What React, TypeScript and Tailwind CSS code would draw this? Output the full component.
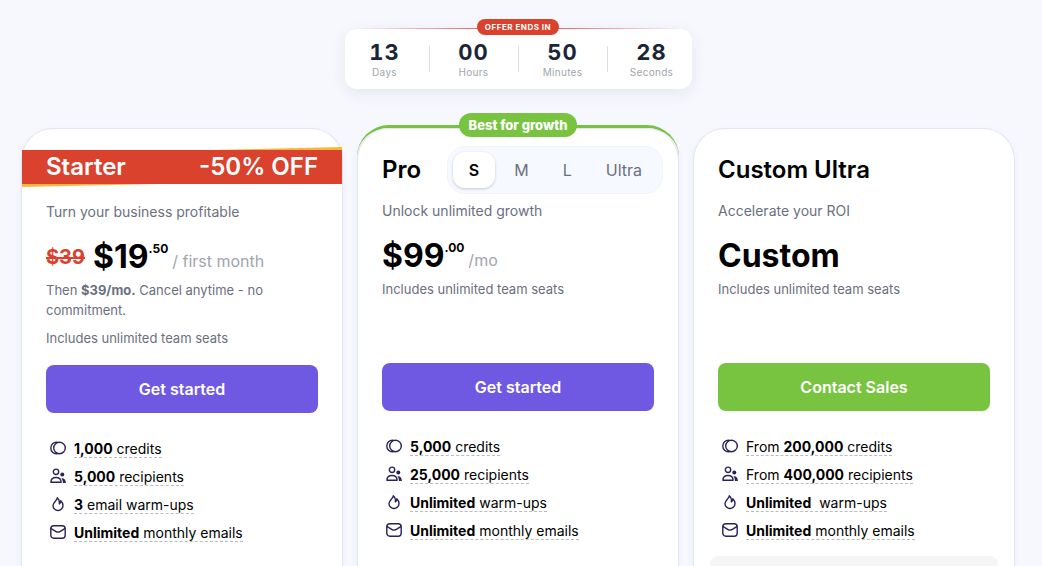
import React from "react";

type Feature = {
  icon: React.ReactNode;
  before?: string;
  bold: string;
  after: string;
};

const countdown = [
  { value: "13", label: "Days" },
  { value: "00", label: "Hours" },
  { value: "50", label: "Minutes" },
  { value: "28", label: "Seconds" },
];

const sizes = ["S", "M", "L", "Ultra"];

function App() {
  return (
    <main className="min-h-screen bg-[#f7f8fe] pt-[29px] pr-[27px] pl-[21px] font-['Inter',sans-serif] text-black antialiased">
      <Countdown />
      <div className="mt-[39px] grid grid-cols-3 gap-[14px]">
        <StarterCard />
        <ProCard />
        <CustomCard />
      </div>
    </main>
  );
}

export default App;

const Countdown = () => {
  return (
    <section className="relative mx-auto flex h-[60px] w-fit items-center rounded-xl bg-white shadow-[0_4px_16px_rgba(30,35,60,0.08)]">
      <div className="absolute inset-x-3 -top-px h-px bg-linear-to-r from-transparent via-[#da422e] to-transparent"></div>
      <div className="absolute inset-x-0 -top-[10px] flex justify-center">
        <span className="h-4 rounded-full bg-[#da422e] px-2 text-[8px] leading-4 font-bold tracking-[0.5px] text-white">
          OFFER ENDS IN
        </span>
      </div>
      {countdown.map((item, i) => (
        <React.Fragment key={item.label}>
          {i > 0 && <div className="mx-1 h-[26px] w-px bg-[#d9dde5]"></div>}
          <div className="flex w-20 flex-col items-center pt-0.5">
            <span className="text-[22px] leading-6 font-bold tracking-[1px] text-[#1c2536] tabular-nums">
              {item.value}
            </span>
            <span className="text-[10px] leading-4 tracking-[0.3px] text-[#a2a5ad]">
              {item.label}
            </span>
          </div>
        </React.Fragment>
      ))}
    </section>
  );
};

const StarterCard = () => {
  return (
    <article className="rounded-t-[32px] border border-b-0 border-[#e3e6f2] bg-white shadow-[0_2px_6px_rgba(60,60,120,0.05)]">
      <div className="relative mt-[21px]">
        <svg
          className="absolute inset-x-0 -top-[3px] h-10 w-full"
          viewBox="0 0 320 40"
          preserveAspectRatio="none"
          aria-hidden="true"
        >
          <polygon points="140,4 320,0 320,36 180,36 0,40 0,30" fill="#f5b83d" />
        </svg>
        <div className="relative flex h-[34px] items-center justify-between bg-[#da422e] px-6 text-2xl font-semibold text-white">
          <h2>Starter</h2>
          <span>-50% OFF</span>
        </div>
      </div>
      <div className="px-6 pt-[18px] pb-20">
        <p className="text-sm leading-5 text-[#6b7080]">
          Turn your business profitable
        </p>
        <div className="mt-[17px] flex h-9 items-center">
          <s className="mr-2 text-xl font-bold text-[#da422e]">$39</s>
          <Price amount="$19" cents=".50" period="/ first month" />
        </div>
        <p className="mt-[5px] text-[13px] leading-5 text-[#6b7080]">
          Then <b>$39/mo.</b> Cancel anytime - no commitment.
        </p>
        <p className="mt-2 text-[13px] leading-5 text-[#6b7080]">
          Includes unlimited team seats
        </p>
        <button className="mt-[17px] h-12 w-full rounded-lg bg-[#6f58e2] font-semibold text-white hover:bg-[#604ad0]">
          Get started
        </button>
        <FeatureList
          features={[
            { icon: <CreditsIcon />, bold: "1,000", after: " credits" },
            { icon: <RecipientsIcon />, bold: "5,000", after: " recipients" },
            { icon: <FlameIcon />, bold: "3", after: " email warm-ups" },
            { icon: <MailIcon />, bold: "Unlimited", after: " monthly emails" },
          ]}
        />
      </div>
    </article>
  );
};

const ProCard = () => {
  const [size, setSize] = React.useState("S");
  return (
    <article className="relative -mt-[3px] rounded-t-[32px] border-t-[3px] border-[#78c441]">
      <div className="absolute inset-x-0 -top-[15px] flex justify-center">
        <span className="h-6 rounded-full bg-[#78c441] px-[10px] text-[13px] leading-6 font-extrabold text-white">
          Best for growth
        </span>
      </div>
      <div className="h-full rounded-t-[32px] border border-b-0 border-[#e3e6f2] bg-white px-6 pt-[17px] shadow-[0_2px_6px_rgba(60,60,120,0.05)]">
        <div className="-mr-[9px] flex h-12 items-center justify-between">
          <h2 className="text-2xl font-semibold">Pro</h2>
          <div className="flex h-12 items-center gap-1 rounded-[18px] border border-[#f0f4fd] bg-[#f6f9ff] px-[5px]">
            {sizes.map((s) => (
              <button
                key={s}
                aria-pressed={s === size}
                onClick={() => setSize(s)}
                className={
                  s === size
                    ? "h-9 rounded-xl bg-white px-4 font-semibold text-black shadow-[0_1px_3px_rgba(0,0,0,0.2)]"
                    : "h-9 rounded-xl px-[15px] text-[#6b7080]"
                }
              >
                {s}
              </button>
            ))}
          </div>
        </div>
        <p className="mt-[7px] text-sm leading-5 text-[#6b7080]">
          Unlock unlimited growth
        </p>
        <div className="mt-[17px] flex h-9 items-center">
          <Price amount="$99" cents=".00" period="/mo" />
        </div>
        <p className="mt-[5px] text-[13px] leading-5 text-[#6b7080]">
          Includes unlimited team seats
        </p>
        <button className="mt-16 h-12 w-full rounded-lg bg-[#6f58e2] font-semibold text-white hover:bg-[#604ad0]">
          Get started
        </button>
        <FeatureList
          features={[
            { icon: <CreditsIcon />, bold: "5,000", after: " credits" },
            { icon: <RecipientsIcon />, bold: "25,000", after: " recipients" },
            { icon: <FlameIcon />, bold: "Unlimited", after: " warm-ups" },
            { icon: <MailIcon />, bold: "Unlimited", after: " monthly emails" },
          ]}
        />
      </div>
    </article>
  );
};

const CustomCard = () => {
  return (
    <article className="rounded-t-[32px] border border-b-0 border-[#e3e6f2] bg-white px-6 pt-[17px] shadow-[0_2px_6px_rgba(60,60,120,0.05)]">
      <div className="flex h-12 items-center">
        <h2 className="text-2xl font-semibold">Custom Ultra</h2>
      </div>
      <p className="mt-[7px] text-sm leading-5 text-[#6b7080]">
        Accelerate your ROI
      </p>
      <div className="mt-[17px] flex h-9 items-center">
        <span className="text-[32px] leading-9 font-bold">Custom</span>
      </div>
      <p className="mt-[5px] text-[13px] leading-5 text-[#6b7080]">
        Includes unlimited team seats
      </p>
      <button className="mt-16 h-12 w-full rounded-lg bg-[#78c441] font-semibold text-white hover:bg-[#69b334]">
        Contact Sales
      </button>
      <FeatureList
        features={[
          {
            icon: <CreditsIcon />,
            before: "From ",
            bold: "200,000",
            after: " credits",
          },
          {
            icon: <RecipientsIcon />,
            before: "From ",
            bold: "400,000",
            after: " recipients",
          },
          {
            icon: <FlameIcon />,
            bold: "Unlimited",
            after: " \u00a0warm-ups",
          },
          { icon: <MailIcon />, bold: "Unlimited", after: " monthly emails" },
        ]}
      />
      <div className="-mx-2 mt-[11px] h-20 rounded-lg bg-[#f5f5f5]"></div>
    </article>
  );
};

const Price = ({
  amount,
  cents,
  period,
}: {
  amount: string;
  cents: string;
  period: string;
}) => {
  return (
    <div className="flex">
      <span className="text-[32px] leading-9 font-bold">{amount}</span>
      <span className="text-xs leading-5 font-bold">{cents}</span>
      <span className="ml-1 self-end leading-7 text-[#a2a5ad]">{period}</span>
    </div>
  );
};

const FeatureList = ({ features }: { features: Feature[] }) => {
  return (
    <ul className="mt-[22px] pl-1 text-sm">
      {features.map((feature, i) => (
        <li key={i} className="flex h-7 items-center gap-2">
          {feature.icon}
          <span className="border-b border-dashed border-[#b9bac6] leading-4">
            {feature.before}
            <b className="font-bold">{feature.bold}</b>
            {feature.after}
          </span>
        </li>
      ))}
    </ul>
  );
};

const Icon = ({ children }: { children: React.ReactNode }) => {
  return (
    <svg
      className="mb-0.5 size-4 shrink-0 text-[#2b2257]"
      viewBox="0 0 16 16"
      fill="none"
      stroke="currentColor"
      strokeWidth="1.4"
      strokeLinecap="round"
      strokeLinejoin="round"
      aria-hidden="true"
    >
      {children}
    </svg>
  );
};

const CreditsIcon = () => (
  <Icon>
    <path d="M7 2.300C3.400 2 .8 4.600.8 8s2.600 6 6.200 5.700" />
    <ellipse cx="9.500" cy="8" rx="5.800" ry="5.700" />
  </Icon>
);

const RecipientsIcon = () => (
  <Icon>
    <circle cx="6" cy="3.800" r="2.700" />
    <path d="M.9 14.300c0-3 1.800-4.800 5.100-4.800s5.100 1.800 5.100 4.800z" />
    <circle cx="12.300" cy="6.500" r="2" fill="currentColor" stroke="none" />
    <path
      d="M12 10.200c2.500 0 3.800 1.700 3.900 4.800h-3c0-2-.4-3.600-1.500-4.700z"
      fill="currentColor"
      stroke="none"
    />
  </Icon>
);

const FlameIcon = () => (
  <Icon>
    <path d="M7.300 1.700c.2 2.600-4.300 4.500-4.300 7.800a5 5 0 0 0 10 0c0-2.200-.9-3.600-2.200-4.800 0 1.500-.4 2.700-1.400 3.200.2-2.600-.4-4.800-2.100-6.200z" />
  </Icon>
);

const MailIcon = () => (
  <Icon>
    <rect x=".8" y="1.800" width="14.400" height="12.400" rx="3" />
    <path d="M1.200 4.600l4.900 3c1.200.7 2.600.7 3.800 0l4.900-3" />
  </Icon>
);
